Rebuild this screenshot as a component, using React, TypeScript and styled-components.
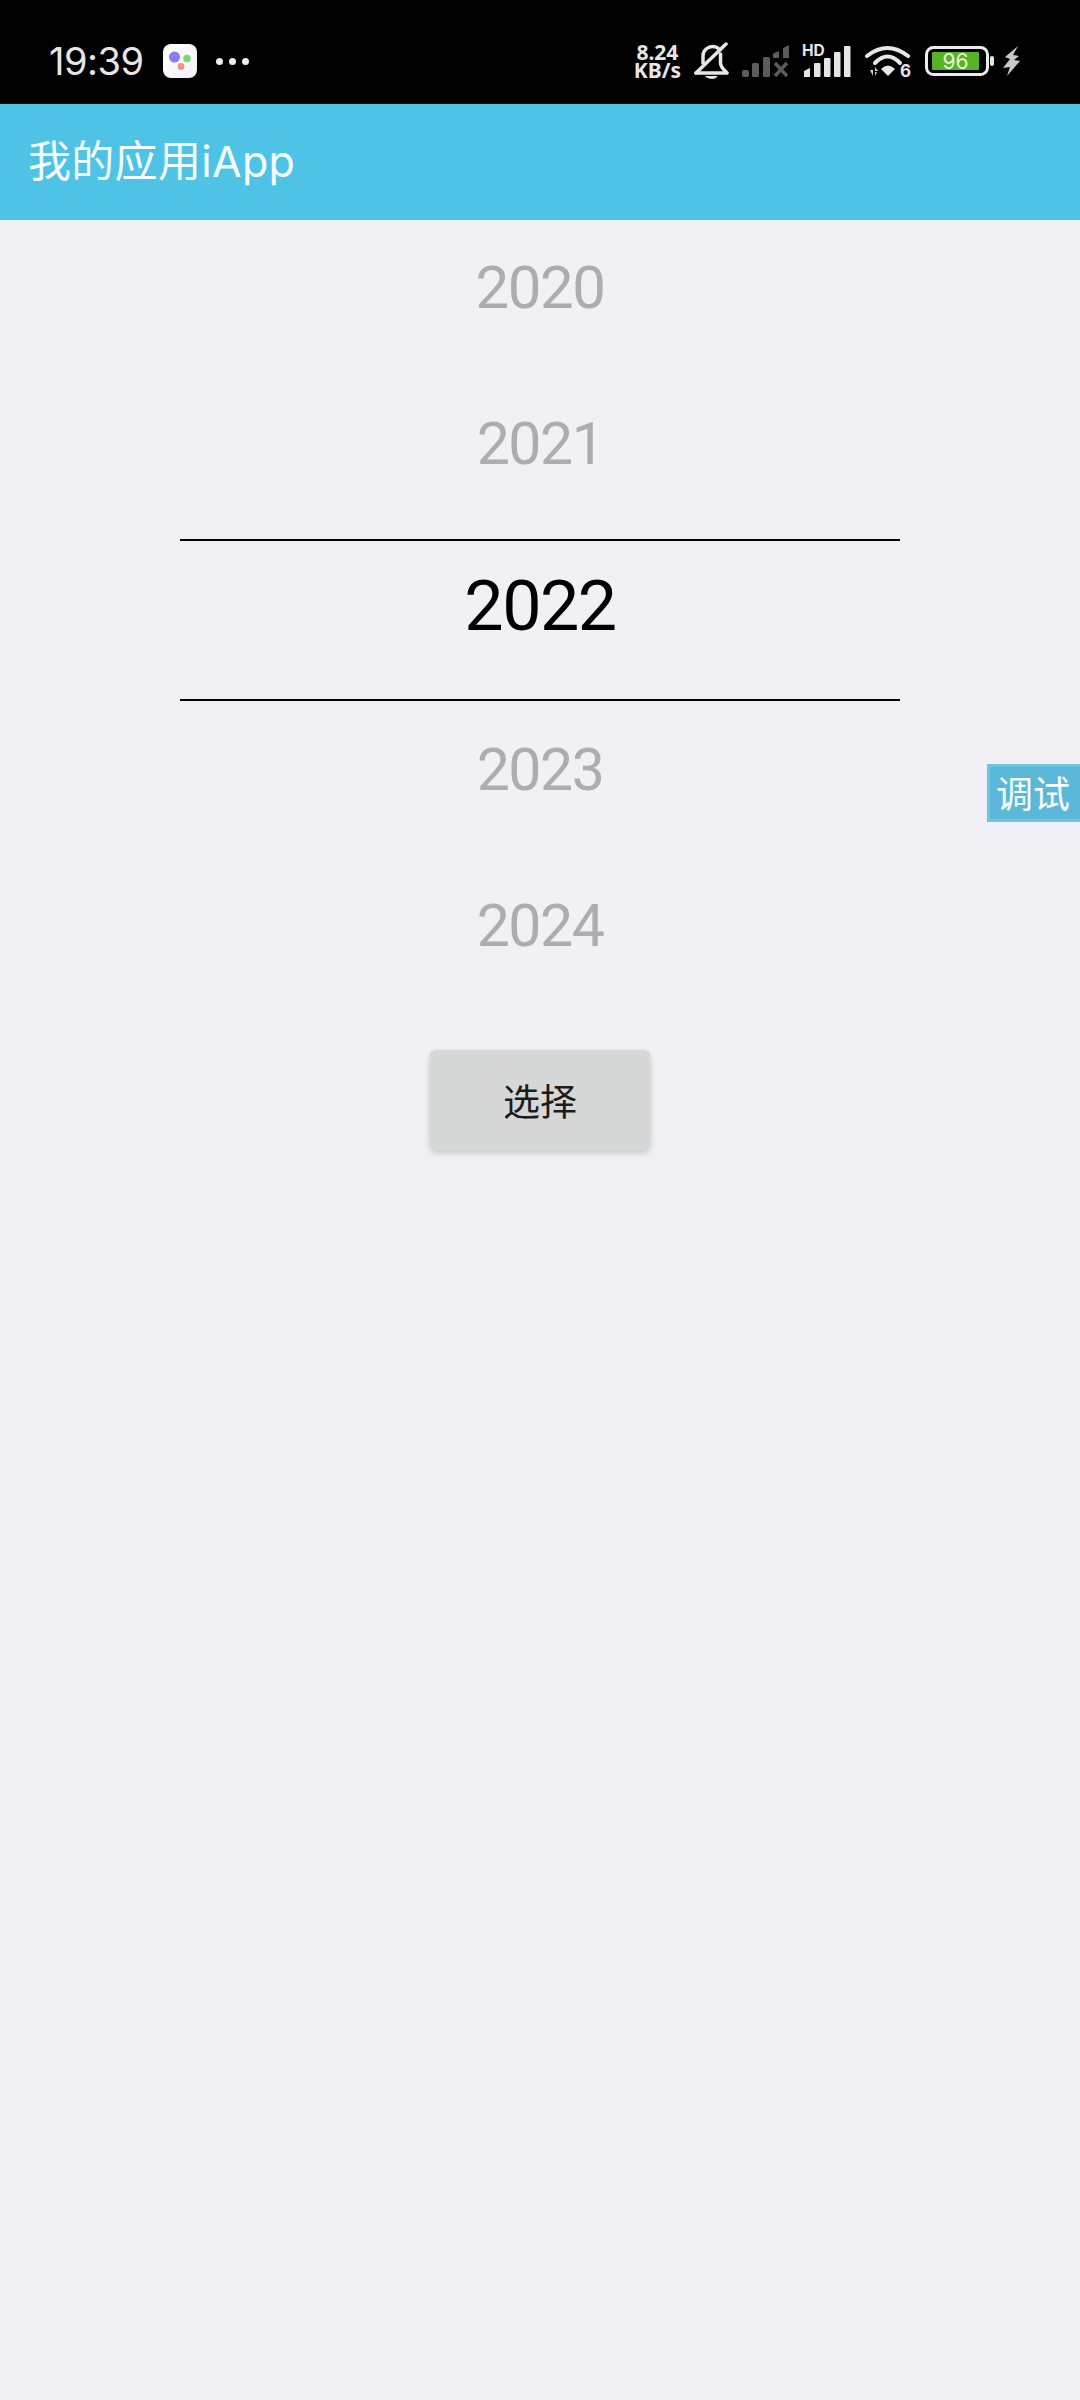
import styled, { createGlobalStyle } from 'styled-components'

const GlobalStyle = createGlobalStyle`
  html, body {
    margin: 0;
    padding: 0;
    background: #f0f0f5;
  }
`

const Page = styled.div`
  width: 1080px;
  height: 2400px;
  position: relative;
  overflow: hidden;
  background: #f0f0f5;
  font-family: Inter, "Noto Sans CJK SC", sans-serif;
  display: flex;
  flex-direction: column;
  align-items: center;
`

const StatusBar = styled.div`
  width: 100%;
  height: 104px;
  box-sizing: border-box;
  flex: none;
  background: #000;
  color: #e6e6e6;
  display: flex;
  align-items: center;
  padding: 18px 60px 0 49px;
`

const Time = styled.span`
  font-size: 38px;
  font-weight: 400;
  letter-spacing: -0.5px;
  width: 114px;
`

const Dots = styled.div`
  display: flex;
  gap: 6px;
  margin-left: 19px;
`

const Dot = styled.i`
  width: 7px;
  height: 7px;
  border-radius: 50%;
  background: #eee;
`

const StatusIcons = styled.div`
  margin-left: auto;
  display: flex;
  align-items: center;
  gap: 13px;
`

const Speed = styled.div`
  text-align: center;
  font-weight: 700;
  font-size: 21px;
  line-height: 18px;
  font-family: "Noto Sans", sans-serif;
`

const AppBar = styled.div`
  width: 100%;
  height: 116px;
  box-sizing: border-box;
  flex: none;
  background: #4fc3e6;
  color: #f4fdff;
  display: flex;
  align-items: center;
  padding: 0 0 8px 28px;
  font-size: 43px;
  letter-spacing: 0.3px;
`

const Wheel = styled.div`
  width: 720px;
  display: flex;
  flex-direction: column;
  font-family: Roboto, sans-serif;
`

const Year = styled.div<{ $size: number; $lift: number }>`
  height: 160px;
  box-sizing: border-box;
  display: flex;
  align-items: center;
  justify-content: center;
  padding-bottom: ${(p) => p.$lift}px;
  color: #adadad;
  font-size: ${(p) => p.$size}px;
  letter-spacing: -1.5px;
`

const ActiveYear = styled(Year)`
  height: 162px;
  margin: -1px 0;
  color: #000;
  border-top: 2px solid #000;
  border-bottom: 2px solid #000;
`

const ChooseButton = styled.button`
  width: 220px;
  height: 100px;
  flex: none;
  margin-top: 30px;
  padding: 0;
  border: none;
  border-radius: 6px;
  background: #d6d8d8;
  color: #1c1c1c;
  font-family: "Noto Sans CJK SC", sans-serif;
  font-size: 37px;
  box-shadow: 0 3px 6px rgba(0, 0, 0, 0.18);
`

const DebugTab = styled.div`
  position: absolute;
  right: 0;
  top: 764px;
  width: 93px;
  height: 58px;
  box-sizing: border-box;
  border: 3px solid #6cc5e2;
  border-right: none;
  background: #5bb8d8;
  color: #f4fdff;
  font-family: "Noto Sans CJK SC", sans-serif;
  font-size: 37px;
  display: flex;
  align-items: center;
  padding: 0 0 2px 6px;
`

const HdSvg = styled.svg`
  margin-bottom: 4px;
  margin-left: -1px;
`

const WifiSvg = styled.svg`
  margin-top: 6px;
`

const BoltSvg = styled.svg`
  margin-left: -5px;
`

const AppIcon = () => (
  <svg width="34" height="34" viewBox="0 0 34 34">
    <defs>
      <linearGradient id="tile" x1="0" y1="0" x2="1" y2="1">
        <stop offset="0" stopColor="#ffffff" />
        <stop offset="1" stopColor="#f6eef8" />
      </linearGradient>
    </defs>
    <rect width="34" height="34" rx="8" fill="url(#tile)" />
    <circle cx="11.500" cy="13" r="5.500" fill="#8c7cf4" />
    <circle cx="24" cy="14.500" r="3.800" fill="#79d87e" />
    <circle cx="18" cy="22.500" r="3.400" fill="#f88f86" />
  </svg>
)

const BellOff = () => (
  <svg width="35" height="38" viewBox="0 0 35 38" fill="none" stroke="#e6e6e6" strokeWidth="3.500" strokeLinecap="round" strokeLinejoin="round">
    <path d="M9 21v-7C9 8 14 4.500 19 4.500c2.500 0 4.500 1 6 2.500" />
    <path d="M26.500 12v9c0 4 3.500 7 6.500 10H2" />
    <path d="M32 2 2 31" />
    <path d="M12 34.500h11c-1 2.500-9 2.500-11 0z" fill="#e6e6e6" strokeWidth="1" />
  </svg>
)

const SignalOff = () => (
  <svg width="48" height="32" viewBox="0 0 48 32" fill="#5c5c5c">
    <rect x="0" y="25" width="7" height="7" rx="2" />
    <rect x="10" y="18" width="7" height="14" rx="1.500" />
    <rect x="21" y="12" width="7" height="20" rx="1.500" />
    <path d="M31 8.500l6-2.500V13h-6z" />
    <path d="M41 3l6-3v13h-6z" />
    <path d="M33 18l12 13M45 18 33 31" stroke="#5c5c5c" strokeWidth="3.500" fill="none" />
  </svg>
)

const SignalHd = () => (
  <HdSvg width="49" height="36" viewBox="-1 -4 49 36" fill="#e6e6e6">
    <text x="-1" y="11" fontFamily="Inter, sans-serif" fontSize="15.500" fontWeight="700">HD</text>
    <path d="M1 26l6-3v9H1z" />
    <rect x="11" y="18" width="6.500" height="14" rx="1" />
    <rect x="21" y="13" width="6.500" height="19" rx="1" />
    <rect x="31" y="7" width="6.500" height="25" rx="1" />
    <rect x="41" y="1" width="6.500" height="31" rx="1" />
  </HdSvg>
)

const Wifi = () => (
  <WifiSvg width="48" height="38" viewBox="0 0 48 38" fill="none">
    <path d="M3 11Q23.500 -5 44 11" stroke="#e6e6e6" strokeWidth="4" strokeLinecap="round" />
    <path d="M11 18Q23.500 5 36 18" stroke="#e6e6e6" strokeWidth="4" strokeLinecap="round" />
    <path d="M17 24Q24 17 31 24L24 31z" fill="#e6e6e6" />
    <path d="M6 25h3v6zM11 22l3 4h-3zM11 27h2l-2 4z" fill="#cfcfcf" />
    <text x="36" y="31.500" fontFamily="Inter, sans-serif" fontSize="17" fontWeight="700" fill="#e6e6e6">6</text>
  </WifiSvg>
)

const Battery = () => (
  <svg width="70" height="30" viewBox="0 0 70 30" fill="none">
    <rect x="1.500" y="1.500" width="61" height="27" rx="7" stroke="#ececec" strokeWidth="3" />
    <rect x="7" y="6" width="47" height="18" rx="1" fill="#58b225" />
    <text x="30.500" y="22.500" textAnchor="middle" fontFamily="Inter, sans-serif" fontSize="21" fill="#e4f7d6">96</text>
    <rect x="65" y="10" width="4" height="10" rx="2" fill="#e6e6e6" />
  </svg>
)

const Bolt = () => (
  <BoltSvg width="17" height="30" viewBox="0 0 17 30" fill="#c8c8c8">
    <path d="M15 0 2 11l5 2-7 9 7-1-3 9 13-15-6-1 5-4-6-1z" />
  </BoltSvg>
)

const App = () => {
  return (
    <Page>
      <GlobalStyle />
      <StatusBar>
        <Time>19:39</Time>
        <AppIcon />
        <Dots>
          <Dot />
          <Dot />
          <Dot />
        </Dots>
        <StatusIcons>
          <Speed>
            8.24
            <br />
            KB/s
          </Speed>
          <BellOff />
          <SignalOff />
          <SignalHd />
          <Wifi />
          <Battery />
          <Bolt />
        </StatusIcons>
      </StatusBar>
      <AppBar>我的应用iApp</AppBar>
      <Wheel>
        <Year $size={60} $lift={25}>2020</Year>
        <Year $size={59} $lift={33}>2021</Year>
        <ActiveYear $size={70} $lift={28}>2022</ActiveYear>
        <Year $size={59} $lift={22}>2023</Year>
        <Year $size={59} $lift={30}>2024</Year>
      </Wheel>
      <ChooseButton>选择</ChooseButton>
      <DebugTab>调试</DebugTab>
    </Page>
  )
}

export default App
